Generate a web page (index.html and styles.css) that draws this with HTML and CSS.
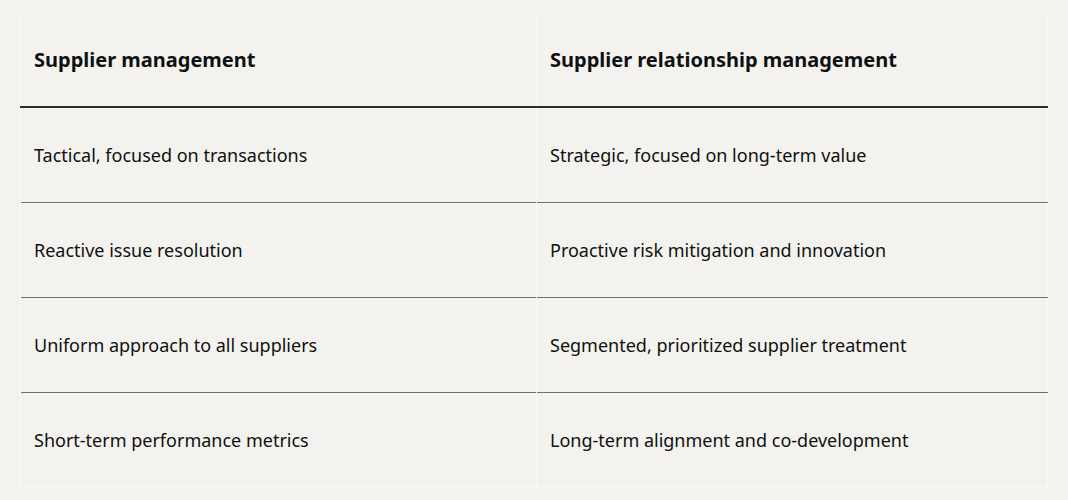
FILE: index.html
```html
<!DOCTYPE html>
<html lang="en">
<head>
<meta charset="utf-8">
<title>Supplier management vs SRM</title>
<link rel="stylesheet" href="styles.css">
</head>
<body>
<div class="wrap">
<table class="cmp">
  <colgroup><col class="c1"><col class="c2"></colgroup>
  <thead>
    <tr><th>Supplier management</th><th>Supplier relationship management</th></tr>
  </thead>
  <tbody>
    <tr><td>Tactical, focused on transactions</td><td>Strategic, focused on long-term value</td></tr>
    <tr><td>Reactive issue resolution</td><td>Proactive risk mitigation and innovation</td></tr>
    <tr><td>Uniform approach to all suppliers</td><td>Segmented, prioritized supplier treatment</td></tr>
    <tr><td>Short-term performance metrics</td><td>Long-term alignment and co-development</td></tr>
  </tbody>
</table>
</div>
</body>
</html>
```
FILE: styles.css
```css
html, body {
  margin: 0;
  padding: 0;
  background: #f3f2ee;
}
.wrap {
  padding: 12px 20px;
}
.cmp {
  width: 100%;
  table-layout: fixed;
  border-collapse: collapse;
  font-family: "Noto Sans", "Open Sans", sans-serif;
  font-size: 18px;
  color: #0f1111;
  border: 1px solid #f9f8f6;
}
.c1 {
  width: 516px;
}
.cmp th, .cmp td {
  text-align: left;
  padding: 0 13px;
  border-left: 1px solid #f9f8f6;
}
.cmp td {
  height: 94px;
  font-weight: 400;
}
.cmp th {
  height: 93px;
  font-size: 20px;
  font-weight: 700;
  border-bottom: 2px solid #2a2a2a;
}
.cmp tbody tr + tr td {
  border-top: 1px solid #707070;
}
```
